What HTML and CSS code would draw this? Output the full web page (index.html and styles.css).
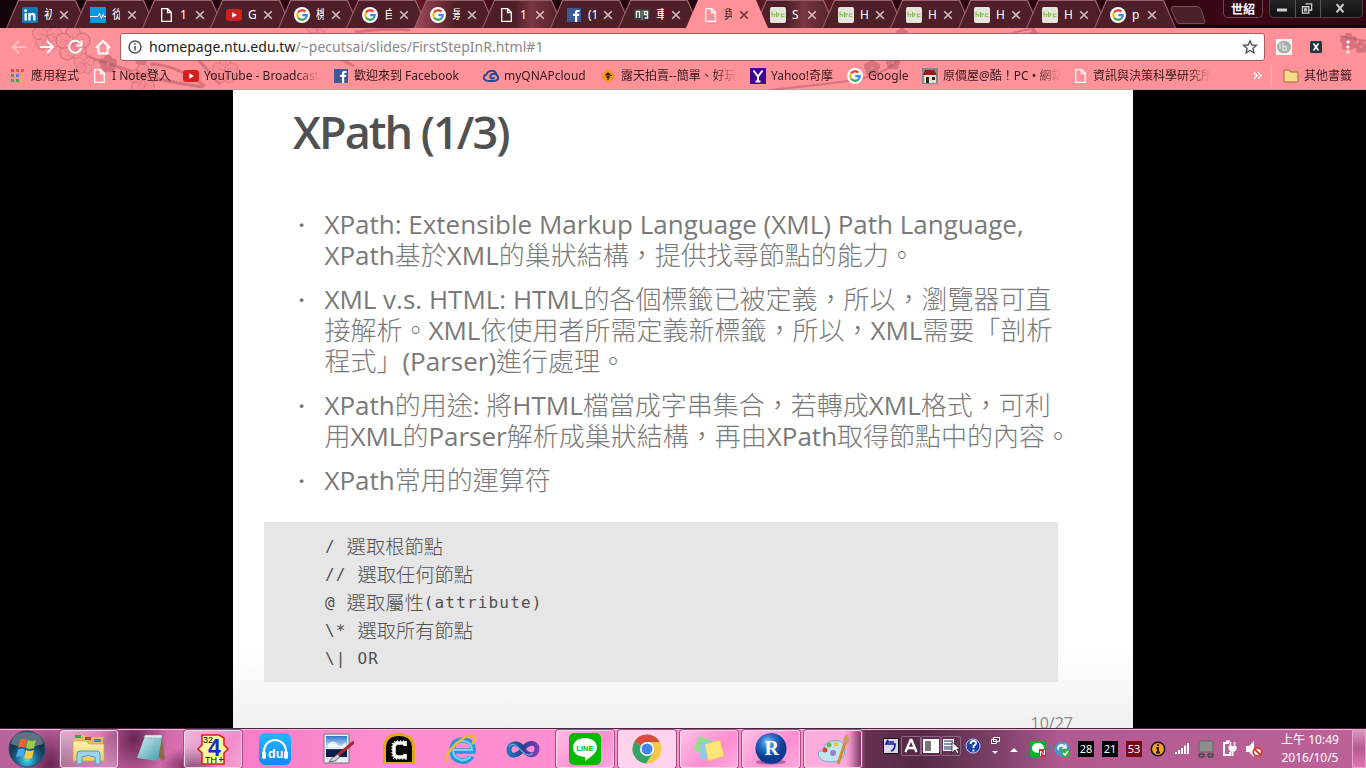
FILE: index.html
```html
<!DOCTYPE html>
<html lang="zh-Hant">
<head>
<meta charset="utf-8">
<title>XPath</title>
<link rel="stylesheet" href="styles.css">
</head>
<body>
<svg class="defs" aria-hidden="true">
  <defs>
    <symbol id="doc" viewBox="0 0 16 16"><path d="M3.7 1.7h6l3.6 3.6v9h-9.6zM9.5 1.7v3.8h3.8" fill="none" stroke="#fff" stroke-width="1.3"/></symbol>
    <symbol id="google" viewBox="0 0 16 16"><circle cx="8" cy="8" r="8" fill="#fff"/><g fill="none" stroke-width="2.3"><path d="M4 5.5A4.8 4.8 0 0 1 11.4 4.6" stroke="#ea4335"/><path d="M4 5.5A5 5 0 0 0 4 10.5" stroke="#fbbc05"/><path d="M4 10.5A4.8 4.8 0 0 0 11.2 11.6" stroke="#34a853"/><path d="M11.2 11.6A4.6 4.6 0 0 0 12.7 8.1H8.2" stroke="#4285f4"/></g></symbol>
    <symbol id="yt" viewBox="0 0 16 16"><rect y="2" width="16" height="12" rx="3" fill="#d2201f"/><path d="M6.2 5.2v5.6L11 8z" fill="#fff"/></symbol>
    <symbol id="fb" viewBox="0 0 16 16"><rect x="1" y="1" width="14" height="14" fill="#3d5a98"/><path d="M9 15V8.9H7V6.8h2V5.2C9 3.2 10.200 2.700 13.500 3v2h-1.300c-.8 0-1 .3-1 1v.8h2.200L13 8.900h-1.800V15z" fill="#fff"/></symbol>
    <symbol id="htc" viewBox="0 0 16 16"><rect width="16" height="16" rx="2" fill="#e6e5dd"/><path d="M2 4.500V10M2 7.500h2.500V10M8 10V7M5.500 7h4.500M6.500 5v5M14.500 7h-3.200v2.700h3.200" fill="none" stroke="#7db63c" stroke-width=".9"/></symbol>
    <symbol id="linkedin" viewBox="0 0 16 16"><rect width="16" height="16" rx="1.500" fill="#0c7cb8"/><path d="M2.500 6h2.300v7.500H2.500zM6.300 6h2.200v1c1.300-1.900 5-1.500 5 2v4.500h-2.300V9.700c0-2.200-2.600-2.100-2.600 0v3.800H6.300z" fill="#fff"/><circle cx="3.600" cy="3.700" r="1.400" fill="#fff"/></symbol>
    <symbol id="pulse" viewBox="0 0 16 16"><rect width="16" height="16" fill="#0c98dc"/><path d="M0 9.500h8l1.500-3 2 5 1.500-4 1 2h2" fill="none" stroke="#fff" stroke-width="1"/></symbol>
    <symbol id="book" viewBox="0 0 16 16"><path d="M0 2h16v10l-8 2-8-2z" fill="#39403f"/><path d="M2.500 11V4.500h3V11M10.500 4.500h3v3h-3zM13.500 7v4h-3" fill="none" stroke="#e9eeee" stroke-width="1.400"/><path d="M8 3v10" stroke="#aaa" stroke-width=".8"/></symbol>
    <symbol id="x" viewBox="0 0 10 10"><path d="M1.200 1.200l7.600 7.600M8.800 1.200L1.200 8.800" fill="none" stroke="currentColor" stroke-width="1.600"/></symbol>
    <symbol id="flower" viewBox="-12 -12 24 24"><g fill="#b35a66"><circle cy="-6" r="5"/><circle cx="5.700" cy="-2" r="5"/><circle cx="3.500" cy="5" r="5"/><circle cx="-3.500" cy="5" r="5"/><circle cx="-5.700" cy="-2" r="5"/></g><circle r="2" fill="#e2808a"/></symbol>
    <symbol id="blossom" viewBox="-12 -12 24 24"><g fill="#f68b94" stroke="#c8707a" stroke-width=".7"><circle cy="-6" r="4.500"/><circle cx="5.700" cy="-2" r="4.500"/><circle cx="3.500" cy="5" r="4.500"/><circle cx="-3.500" cy="5" r="4.500"/><circle cx="-5.700" cy="-2" r="4.500"/></g><circle r="4" fill="#f68b94"/><path d="M0 0v-5M0 0l5-2M0 0l3 5M0 0l-3 5M0 0l-5-2" stroke="#c8707a" stroke-width=".6"/></symbol>
    <linearGradient id="gold" x2="0" y2="1"><stop stop-color="#fff2b5"/><stop offset="1" stop-color="#ecca62"/></linearGradient>
    <radialGradient id="orb" cx=".5" cy=".8"><stop stop-color="#42dcf4"/><stop offset=".6" stop-color="#1c628f"/><stop offset="1" stop-color="#163754"/></radialGradient>
    <radialGradient id="ball" cx=".4" cy=".3"><stop stop-color="#9ccbf6"/><stop offset=".45" stop-color="#2b74cf"/><stop offset="1" stop-color="#0c3b91"/></radialGradient>
    <linearGradient id="note" x2="1" y2="1"><stop stop-color="#d4f1f2"/><stop offset="1" stop-color="#3e98ae"/></linearGradient>
    <linearGradient id="du" x2="0" y2="1"><stop stop-color="#22b7ff"/><stop offset="1" stop-color="#1489f1"/></linearGradient>
    <linearGradient id="vs"><stop stop-color="#1d77c0"/><stop offset=".5" stop-color="#263f91"/><stop offset="1" stop-color="#7b3db3"/></linearGradient>
    <linearGradient id="sky" x2="0" y2="1"><stop stop-color="#2e77c8"/><stop offset=".6" stop-color="#e6f3fb"/><stop offset=".65" stop-color="#0b1c4d"/></linearGradient>
  </defs>
</svg>

<header class="browser">
  <div class="tabstrip">
    <div class="tabs">
      <div class="tab"><svg><use href="#linkedin"/></svg><span>初</span><svg class="close"><use href="#x"/></svg></div>
      <div class="tab"><svg><use href="#pulse"/></svg><span>從</span><svg class="close"><use href="#x"/></svg></div>
      <div class="tab"><svg><use href="#doc"/></svg><span>1</span><svg class="close"><use href="#x"/></svg></div>
      <div class="tab"><svg><use href="#yt"/></svg><span>G</span><svg class="close"><use href="#x"/></svg></div>
      <div class="tab"><svg><use href="#google"/></svg><span>機</span><svg class="close"><use href="#x"/></svg></div>
      <div class="tab"><svg><use href="#google"/></svg><span>自</span><svg class="close"><use href="#x"/></svg></div>
      <div class="tab glow"><svg><use href="#google"/></svg><span>景</span><svg class="close"><use href="#x"/></svg></div>
      <div class="tab glow-right"><svg><use href="#doc"/></svg><span>1</span><svg class="close"><use href="#x"/></svg></div>
      <div class="tab"><svg><use href="#fb"/></svg><span>(1</span><svg class="close"><use href="#x"/></svg></div>
      <div class="tab"><svg><use href="#book"/></svg><span>車</span><svg class="close"><use href="#x"/></svg></div>
      <div class="tab active"><svg><use href="#doc"/></svg><span>與</span><svg class="close"><use href="#x"/></svg></div>
      <div class="tab glow-right"><svg><use href="#htc"/></svg><span>S</span><svg class="close"><use href="#x"/></svg></div>
      <div class="tab"><svg><use href="#htc"/></svg><span>H</span><svg class="close"><use href="#x"/></svg></div>
      <div class="tab"><svg><use href="#htc"/></svg><span>H</span><svg class="close"><use href="#x"/></svg></div>
      <div class="tab"><svg><use href="#htc"/></svg><span>H</span><svg class="close"><use href="#x"/></svg></div>
      <div class="tab"><svg><use href="#htc"/></svg><span>H</span><svg class="close"><use href="#x"/></svg></div>
      <div class="tab"><svg><use href="#google"/></svg><span>p</span><svg class="close"><use href="#x"/></svg></div>
    </div>
    <svg class="newtab" viewBox="0 0 36 18"><path d="M4 .5h23q3 0 4 3l4 12q0 2-2 2H10q-3 0-4-3L1 3Q1 .5 4 .5z" fill="#4b2028" stroke="#7c4f56"/></svg>
    <div class="profile">世紹</div>
    <div class="winctl">
      <svg width="25" height="17" viewBox="0 0 25 17"><path d="M7 8.500h10v3H7z" fill="#ccc"/></svg>
      <svg width="25" height="17" viewBox="0 0 25 17"><path d="M9.700 3.700h6.600v6.600H14M6.700 6.700h6.600v6.600H6.700zM9 9h2v2H9z" fill="none" stroke="#ccc" stroke-width="1.400"/></svg>
      <svg width="42" height="17" viewBox="0 0 42 17"><path d="M16 4l7 8.500M23 4l-7 8.500" stroke="#ccc" stroke-width="2.200"/></svg>
    </div>
  </div>

  <div class="chrome">
    <svg class="petals" viewBox="0 0 1366 62">
      <g fill="none" stroke="#b35a66" stroke-width="3" opacity=".55"><path d="M85 28q25 8 48 16t70 15M195 28l25 28M205 58q-30-22-55-22" /><path d="M770 62q20-2 70-8t60-26M1010 6q10-4 25-5M1340 8l26 5" stroke-width="2"/><path d="M342 32l12 6M355 4q30-4 55-2"/></g>
      <g opacity=".8">
        <use href="#blossom" x="30" y="-9" width="34" height="34"/><use href="#blossom" x="53" y="-4" width="40" height="40"/>
        <use href="#blossom" x="72" y="24" width="24" height="24"/><use href="#blossom" x="126" y="34" width="34" height="34"/>
        <use href="#blossom" x="210" y="28" width="30" height="30"/><use href="#blossom" x="305" y="-10" width="24" height="24"/>
      </g>
      <g opacity=".55">
        <use href="#flower" x="98" y="26" width="20" height="20"/><use href="#flower" x="133" y="22" width="16" height="16"/><use href="#flower" x="1339" y="4" width="19" height="19"/><use href="#flower" x="1354" y="12" width="14" height="14"/>
        <use href="#flower" x="863" y="31" width="18" height="18"/><use href="#flower" x="885" y="27" width="16" height="16"/><use href="#flower" x="895" y="-1" width="14" height="14"/><use href="#flower" x="1027" y="1" width="14" height="14"/>
      </g>
    </svg>
    <div class="toolbar">
      <svg class="nav dim" viewBox="0 0 16 16"><path d="M15 8H2M8 2L2 8l6 6"/></svg>
      <svg class="nav" viewBox="0 0 16 16"><path d="M1 8h13M8 2l6 6-6 6"/></svg>
      <svg class="nav" viewBox="0 0 16 16"><path d="M13 4.200A6 6 0 1 0 14 9M14.500 1.500v5h-5"/></svg>
      <svg class="nav" viewBox="0 0 16 16"><path d="M1 9l7-7 7 7M3.500 7.500v7h9v-7" /></svg>
      <div class="omnibox">
        <svg width="14" height="14" viewBox="0 0 14 14"><circle cx="7" cy="7" r="6" fill="none" stroke="#555" stroke-width="1.500"/><path d="M7 6v4.500M7 3.300v1.500" stroke="#555" stroke-width="1.600"/></svg>
        <span class="url"><b>homepage.ntu.edu.tw</b>/~pecutsai/slides/FirstStepInR.html#1</span>
        <svg width="16" height="16" viewBox="0 0 16 16"><path d="M8 1.800l1.800 4.200 4.500.4-3.400 3 1 4.400L8 11.500l-3.900 2.300 1-4.400-3.400-3 4.500-.4z" fill="none" stroke="#555" stroke-width="1.400"/></svg>
      </div>
      <svg class="ext" viewBox="0 0 16 16"><path d="M0 0h16v16H0z" fill="#f4f4f4"/><ellipse cx="8" cy="8" rx="7" ry="6.300" fill="#a7acad"/><path d="M7 3.500v7.500h3.500V7.500H7M4 4v6" fill="none" stroke="#ddd" stroke-width="1.300"/></svg>
      <svg class="ext second" viewBox="0 0 16 16"><rect x="2" y="2" width="12" height="12" rx="1.500" fill="#263442"/><path d="M5.500 4.500l5 7M10.500 4.500l-5 7" stroke="#fff" stroke-width="1.600"/></svg>
      <svg class="ext third" viewBox="0 0 16 16" fill="#fff"><circle cx="8" cy="3" r="1.600"/><circle cx="8" cy="8" r="1.600"/><circle cx="8" cy="13" r="1.600"/></svg>
    </div>
    <nav class="bookmarks">
      <a class="w81"><svg viewBox="0 0 16 16"><path d="M1 1h3v3H1z" fill="#e2483d"/><path d="M6 1h3v3H6zM11 1h3v3h-3z" fill="#e25a3d"/><path d="M1 6h3v3H1z" fill="#3aa457"/><path d="M6 6h3v3H6z" fill="#4a80e8"/><path d="M11 6h3v3h-3z" fill="#f4b52c"/><path d="M1 11h3v3H1z" fill="#3aa457"/><path d="M6 11h3v3H6z" fill="#3aa457"/><path d="M11 11h3v3h-3z" fill="#f4b52c"/></svg><span>應用程式</span></a>
      <a class="w92"><svg><use href="#doc"/></svg><span>I Note登入</span></a>
      <a class="w150 fade"><svg><use href="#yt"/></svg><span>YouTube - Broadcast</span></a>
      <a class="w150"><svg><use href="#fb"/></svg><span>歡迎來到 Facebook</span></a>
      <a class="w117"><svg viewBox="0 0 16 16"><path d="M13.500 6.500Q12 1.500 7 3 4 4 3.300 6.500-.5 8 1.200 11q1.300 2 4 2h6.500q4-.5 3.300-4.200Q13.500 5 9.500 6 6.500 7 7.500 9.500q2 2 4 0" fill="none" stroke="#264a91" stroke-width="2"/></svg><span>myQNAPcloud</span></a>
      <a class="w150 fade"><svg viewBox="0 0 16 16"><rect x="2.500" y="2.500" width="11" height="11" rx="2" transform="rotate(45 8 8)" fill="#f7941d"/><path d="M8 12V5M5.500 7.500L8 5l2.500 2.500H12M6 9h4" fill="none" stroke="#241505" stroke-width="1.200"/></svg><span>露天拍賣--簡單、好玩</span></a>
      <a class="w97"><svg viewBox="0 0 16 16"><path d="M0 0h16v16H0z" fill="#400090"/><path d="M3.500 2.500L8 8.500l4.500-6M8 8v5.500M5.500 13.500h5" fill="none" stroke="#fff" stroke-width="2"/></svg><span>Yahoo!奇摩</span></a>
      <a class="w75"><svg><use href="#google"/></svg><span>Google</span></a>
      <a class="w150 fade"><svg viewBox="0 0 16 16"><path d="M0 0h16v16H0z" fill="#7d8b88"/><path d="M2 7h12v8H2z" fill="#e4dfcf"/><path d="M3 2h9l3 5H1z" fill="#9c1820"/><path d="M4 9h3v6H4zM10 9h3v3h-3z" fill="#2b2320"/></svg><span>原價屋@酷！PC • 網站</span></a>
      <a class="w150 fade"><svg><use href="#doc"/></svg><span>資訊與決策科學研究所</span></a>
      <svg class="more" viewBox="0 0 10 10"><path d="M1 1.500L4.500 5 1 8.500M5.500 1.500L9 5 5.500 8.500" fill="none" stroke="#fff" stroke-width="1.500"/></svg>
      <a class="others"><svg viewBox="0 0 16 16"><path d="M1 3q0-1 1-1h4l1.500 2H14q1 0 1 1v8q0 1-1 1H2q-1 0-1-1z" fill="#f7d98a" stroke="#9c6b33"/></svg><span>其他書籤</span></a>
    </nav>
  </div>
</header>

<main class="stage">
  <article class="slide">
    <h1>XPath (1/3)</h1>
    <ul>
      <li>XPath: Extensible Markup Language (XML) Path Language,<br>XPath<i>基於</i>XML<i>的巢狀結構，提供找尋節點的能力。</i></li>
      <li>XML v.s. HTML: HTML<i>的各個標籤已被定義，所以，瀏覽器可直<br>接解析。</i>XML<i>依使用者所需定義新標籤，所以，</i>XML<i>需要「剖析<br>程式」</i>(Parser)<i>進行處理。</i></li>
      <li>XPath<i>的用途</i>: <i>將</i>HTML<i>檔當成字串集合，若轉成</i>XML<i>格式，可利<br>用</i>XML<i>的</i>Parser<i>解析成巢狀結構，再由</i>XPath<i>取得節點中的內容。</i></li>
      <li>XPath<i>常用的運算符</i></li>
    </ul>
    <pre>/ <i>選取根節點</i>
// <i>選取任何節點</i>
@ <i>選取屬性</i>(attribute)
\* <i>選取所有節點</i>
\| OR</pre>
    <div class="page">10/27</div>
  </article>
</main>

<footer class="taskbar">
  <div class="apps">
    <div class="start"><svg width="38" height="38" viewBox="0 0 38 38"><circle cx="19" cy="19" r="18" fill="url(#orb)" stroke="#34505f"/><path d="M3 14Q5 2 19 2t16 12Q19 20 3 14z" fill="#fff" opacity=".3"/><path d="M12 10q4-2 7 0l-2 8q-4-2-7 0z" fill="#f0642d"/><path d="M20 10q4 2 8 0l-2 8q-4 2-8 0z" fill="#9ccc42"/><path d="M10 19.500q4-2 7 0l-2 8q-4-2-7 0z" fill="#49a8e8"/><path d="M18 20q4 2 8 0l-2 8q-4 2-8 0z" fill="#fccb3b"/></svg></div>
    <div class="app on"><svg viewBox="0 0 34 32"><path d="M2 6l3-4h8l2 2h16v24H2z" fill="#e3bd5c"/><path d="M3 2h6v3H3z" fill="#36a852"/><path d="M13 4h6v3h-6z" fill="#d43c31"/><path d="M22 6h7v3h-7z" fill="#3d88d8"/><path d="M1 8h13l3 3h15v17H1z" fill="url(#gold)" stroke="#c7a246" stroke-width=".7"/><path d="M5 31V21q0-3 3-3h17q3 0 3 3v10h-5v-7q-7-3-13 0v7z" fill="#9bd5f2" stroke="#4b9cc9"/></svg></div>
    <div class="app"><svg viewBox="0 0 34 32"><path d="M9 3h19l3 23-3 2z" fill="#8d6a45"/><path d="M11 3h17l-4 25-21-3z" fill="url(#note)"/><path d="M11 2h17v3H10z" fill="#dbe8ec" stroke="#6d8790" stroke-width=".6" stroke-dasharray="1.500 1"/></svg></div>
    <div class="app on"><svg viewBox="0 0 34 32"><path d="M6 2h17l5 3v7l4 4-4 4v11H6V20l-4-4 4-4z" fill="#fff7a0" stroke="#d52016" stroke-width="1.500"/><text x="7" y="10" font-size="9">32</text><text x="12" y="23" font-size="23" font-weight="bold" fill="#1532bd">4</text><text x="9" y="30" font-size="9">TH</text><path d="M25 24v5M23 26.500h5" stroke="#1532bd"/></svg></div>
    <div class="app"><svg viewBox="0 0 34 32"><rect x="1" width="32" height="32" rx="6" fill="url(#du)"/><path d="M6 21V18a11 11 0 0 1 22 0v3" fill="none" stroke="#fff" stroke-width="2"/><rect x="4" y="18" width="4" height="8" rx="2" fill="#fff"/><rect x="26" y="18" width="4" height="8" rx="2" fill="#fff"/><text x="10" y="25" font-size="12.500" font-weight="bold" fill="#fff">du</text></svg></div>
    <div class="app"><svg viewBox="0 0 34 32"><path d="M4 1h25v29H4z" fill="#e8edf2" stroke="#777"/><path d="M6 3h21v21H6z" fill="url(#sky)"/><path d="M8 11q6-5 9 0t9-2v5H8z" fill="#fff" opacity=".8"/><path d="M34 9L17 23" stroke="#b4202d" stroke-width="3"/><path d="M18 21l-7 5-2 3 6-1 5-4z" fill="#ccd5da" stroke="#433" stroke-width=".7"/></svg></div>
    <div class="app"><svg viewBox="0 0 34 32"><path d="M1 31V14Q2 0 17 0t16 14v17z" fill="#e4a818"/><path d="M4 29V14Q5 3 17 3t13 11v15z" fill="#050505"/><path d="M23 13V10H15q-3 1-3 4v6q0 4 4 4h7v-3" fill="none" stroke="#fff" stroke-width="3.500"/><path d="M24 12V8H14q-4 1-4 5v8q0 5 5 5h9v-5" fill="none" stroke="#fff" stroke-width="1.500" stroke-dasharray="1 2"/></svg></div>
    <div class="app"><svg viewBox="0 0 34 32"><path d="M28 23Q24 29 18 28 8 27 8 17 9 7 19 7q11 1 10 11H10" fill="none" stroke="#2996dc" stroke-width="5.500"/><path d="M27 22Q24 28 17 27 9 25 9 17 10 8 19 8q9 1 9 9H10" fill="none" stroke="#78d3f8" stroke-width="2"/><path d="M4 29Q-1 24 11 12T30 3q3 2-2 8" fill="none" stroke="#efb831" stroke-width="2.500"/></svg></div>
    <div class="app"><svg viewBox="0 0 34 32"><path d="M17 16C12 8 3 10 3 17s8 7 14-1 14-7 14 0-9 8-14 0z" fill="none" stroke="url(#vs)" stroke-width="5"/><path d="M3 14q2-4 6-2l9 8q5 4 9 0" fill="none" stroke="#67a8de" stroke-width="1.200"/></svg></div>
    <div class="app on bright"><svg viewBox="0 0 34 32"><rect x="1" width="32" height="32" rx="5" fill="#00b900"/><path d="M29 14.500c0 5-6 9.500-12 13.500v-4C10 24 5 20 5 14.500S10 5 17 5s12 4 12 9.500z" fill="#fff"/><text x="8.500" y="17.500" font-size="7.500" font-weight="bold" fill="#00b900" textLength="17">LINE</text></svg></div>
    <div class="app on bright current"><svg viewBox="0 0 34 32"><circle cx="17" cy="16" r="14.500" fill="#f4c94a"/><path d="M17 16L4.400 8.800A14.500 14.500 0 0 1 29.600 9H17z" fill="#d74d3e"/><path d="M17 16L4.400 8.800A14.500 14.500 0 0 0 16 30.500l7-11z" fill="#36a36a"/><circle cx="17" cy="16" r="7" fill="#fff"/><circle cx="17" cy="16" r="5.500" fill="#4285e8"/></svg></div>
    <div class="app on bright"><svg viewBox="0 0 34 32"><path d="M7 3l14 5-5 15L1 17z" fill="#9ad894"/><path d="M9 9l14-1v17l-15 1z" fill="#8bc9ee"/><path d="M13 11l15-4 4 16-16 5z" fill="#ffe57a" stroke="#e5bf43" stroke-width=".5"/></svg></div>
    <div class="app on bright"><svg viewBox="0 0 34 32"><ellipse cx="17" cy="29" rx="15" ry="2.500" fill="#5c2f69" opacity=".5"/><circle cx="17" cy="15.500" r="15.500" fill="url(#ball)"/><text class="serif" x="10.500" y="22" font-size="20" font-weight="bold" fill="#fff">R</text></svg></div>
    <div class="app on paint"><svg viewBox="0 0 34 32"><path d="M15 8q13-3 14 8 0 13-14 13Q2 29 2 20q1-3 5-2 4-1 1-4 1-4 7-6z" fill="#c4e3f1" stroke="#72a9c7"/><circle cx="9" cy="17" r="2.500" fill="#d64835"/><circle cx="13" cy="12" r="2.500" fill="#64b755"/><circle cx="20" cy="11" r="2.500" fill="#eac743"/><circle cx="17" cy="20" r="3" fill="#9a7fc6"/><path d="M30 7L22 31" stroke="#d88a31" stroke-width="3"/><path d="M27 9q0-6 4-8 3 4 1 10z" fill="#c8a166"/></svg></div>
  </div>
  <div class="tray">
    <svg class="s20" viewBox="0 0 20 20"><path d="M2.500 2.500h15v15h-15z" fill="#ddd6e8" stroke="#111"/><path d="M7 4L5 8h9q0 6-4 7M6 6h7" fill="none" stroke="#101d9b" stroke-width="1.700"/></svg>
    <svg class="s20 key" viewBox="0 0 20 20"><path d="M4.500 16L9.500 4h1l5 12M6.500 12h7" fill="none" stroke="#fff" stroke-width="2.300"/></svg>
    <svg class="s20 key" viewBox="0 0 20 20"><path d="M2 3h16v14H2z" fill="#fff"/><path d="M4 5h6v10H4z" fill="#777"/></svg>
    <svg class="s20 key" viewBox="0 0 20 20"><path d="M2 3h11v12H2z" fill="#fff"/><path d="M3 5h9M3 8h9M3 11h9M3 13h9" stroke="#14216f"/><path d="M11 6v11l3-3 2 4 2-1-2-4h3z" fill="#fff" stroke="#111" stroke-width=".7"/></svg>
    <svg class="s24" viewBox="0 0 24 20"><circle cx="12" cy="10" r="7" fill="#1943a6" stroke="#c6d1ed"/><path d="M9.500 8q0-3 3-3t2.500 2.500Q14.500 9 12.500 10v2M12.500 13.500v2" fill="none" stroke="#fff" stroke-width="1.800"/></svg>
    <svg class="s20" viewBox="0 0 20 20"><path d="M8.500 1.500h6v4h-6zM6.500 3.500h5v4h-5z" fill="#593247" stroke="#fff"/><path d="M7 15h6l-3 3z" fill="#fff"/></svg>
    <svg class="s18" viewBox="0 0 18 20"><path d="M5 16h8l-4-4z" fill="#fff"/></svg>
    <svg class="t" viewBox="0 0 24 20"><rect x="4" y="2" width="16" height="16" rx="2" fill="#08b32b"/><ellipse cx="12" cy="9" rx="6" ry="5" fill="#fff"/><path d="M13 10h7v8h-7z" fill="#d92b2b"/><path d="M14.500 17v-5l4 4v-5" fill="none" stroke="#fff"/></svg>
    <svg class="t" viewBox="0 0 24 20"><circle cx="12" cy="10" r="7.500" fill="#4795cb"/><path d="M7 10q0-5 5-5l3 1 1-2 1 6h-5l1-2q-5-1-4 4" fill="#e9f8ff"/><circle cx="15.500" cy="14" r="4.500" fill="#39aa47"/><path d="M13 14l2 2 3-4" fill="none" stroke="#fff" stroke-width="1.500"/></svg>
    <span class="t num"><b>28</b></span><span class="t num"><b>21</b></span><span class="t num red"><b>53</b></span>
    <svg class="t" viewBox="0 0 24 20"><circle cx="12" cy="10" r="6.700" fill="#efa12c" stroke="#1d1308" stroke-width="1.500"/><path d="M10.500 9H12v4.500M10 13.500h4M11 6.200h2" stroke="#1d1308" stroke-width="1.800" fill="none"/></svg>
    <svg class="t" viewBox="0 0 24 20" fill="#fff"><path d="M5 13h2v2H5zM8 11h2v4H8zM11 9h2v6h-2zM14 6.500h2V15h-2zM17 4h2v11h-2z"/></svg>
    <svg class="t" viewBox="0 0 24 20"><path d="M5 2h14v11H5z" fill="#8e8e8e" stroke="#666"/><path d="M5 15h5v3H5zM14 15h5v3h-5z" fill="#777" stroke="#333"/></svg>
    <svg class="t" viewBox="0 0 24 20"><path d="M11 4H6v12h6v-3M8 2.500h4" fill="none" stroke="#fff" stroke-width="2"/><path d="M12.500 3v4M16.500 3v4" stroke="#fff" stroke-width="1.500"/><path d="M10.500 7h8v3q-1 3-4 3t-4-3zM13.500 12h2v5h-2z" fill="#fff"/></svg>
    <svg class="t" viewBox="0 0 24 20"><path d="M4 7h3l5-5v16l-5-5H4z" fill="#fff"/><circle cx="15.500" cy="13" r="4.200" fill="#fff" stroke="#df3427" stroke-width="1.800"/><path d="M12.500 10l6 6" stroke="#df3427" stroke-width="1.800"/></svg>
    <div class="clock">上午 10:49<br>2016/10/5</div>
    <div class="peek"></div>
  </div>
</footer>
</body>
</html>
```
FILE: styles.css
```css
* { box-sizing: border-box; }
body {
  margin: 0; width: 1366px; height: 768px; overflow: hidden;
  display: flex; flex-direction: column; background: #000;
  font-family: "Noto Sans", "Noto Sans CJK TC", sans-serif;
}
svg { display: block; flex: none; }
i { font-style: normal; }
.defs { position: absolute; width: 0; height: 0; }

.browser { flex: none; height: 90px; }
.tabstrip {
  height: 28px; display: flex; align-items: flex-start; padding-left: 6px;
  background: linear-gradient(90deg, #15030a, #280611 20%, #681728 32%, #1d050d 40%, #25060e 52%, #7c2337 58%, #2f0712 65%, #29060f 84%, #3d0715 90%, #320410);
  box-shadow: inset 0 -3px #140207;
}
.tabs { display: flex; height: 28px; }
.tab {
  width: 82px; height: 28px; margin-right: -14px; padding: 0 16px;
  display: flex; align-items: center; position: relative; z-index: 0; color: #fff;
  clip-path: polygon(12px 0, 70px 0, 82px 28px, 0 28px); background: #966169;
}
.tab::before {
  content: ""; position: absolute; inset: 1px 0 0; z-index: -1;
  background: #4e1f28; clip-path: polygon(13px 0, 69px 0, 81px 27px, 1px 27px);
}
.tab.active { z-index: 1; color: #222; background: #ff9199; }
.tab.active::before { background: #ff9199; }
.tab.glow::before { background: linear-gradient(90deg, #a1495b, #4e1f28 50%); }
.tab.glow-right::before { background: linear-gradient(90deg, #4e1f28 40%, #773640 60%, #4e1f28); }
.tab svg { width: 16px; height: 16px; margin-top: 2px; }
.tab span {
  width: 8px; margin-left: 6px; overflow: hidden; font-size: 12px; line-height: 18px;
  white-space: nowrap; margin-top: 2px;
}
.tab svg.close { width: 10px; height: 10px; margin-left: 7px; color: #d3bfc2; }
.tab.active svg.close { color: #703139; }
.newtab { width: 36px; height: 18px; margin: 6px 0 0 8px; }
.profile {
  width: 40px; height: 18px; margin-left: 17px; border: 1px solid #734550; border-top: 0;
  border-radius: 0 0 5px 5px; background: #300913; color: #fff;
  font-size: 12px; font-weight: 700; line-height: 20px; text-align: center;
}
.winctl { display: flex; margin-left: 6px; border: 1px solid #4f4045; border-top: 0; border-radius: 0 0 5px 5px; background: linear-gradient(#272326, #111); }
.winctl svg + svg { border-left: 1px solid #5d5357; }

.chrome {
  height: 62px; position: relative; z-index: 0;
  background: #ff9199; border-bottom: 1px solid #b7a3a6;
}
.petals { position: absolute; left: 0; top: 0; width: 1366px; height: 62px; z-index: -1; }
.toolbar { height: 33px; padding: 5px 8px 0 11px; display: flex; align-items: center; }
.nav { width: 16px; height: 16px; margin-right: 12px; fill: none; stroke: #fff; stroke-width: 2; }
.nav.dim { opacity: .4; }
.omnibox {
  width: 1145px; height: 28px; margin-left: -3px; padding: 0 6px 0 7px;
  display: flex; align-items: center; border: 1px solid #a95c64; border-radius: 3px; background: #fff;
}
.url { flex: 1; margin-left: 7px; font-size: 14px; letter-spacing: .03px; line-height: 20px; color: #888; }
.url b { font-weight: 400; color: #222; }
.ext { width: 16px; height: 16px; margin-left: 11px; }
.ext.second { margin-left: 16px; }
.ext.third { margin-left: 16px; }
.bookmarks { height: 28px; padding: 1px 13px 0 10px; display: flex; align-items: center; color: #33191c; font-size: 12px; }
.bookmarks a { display: flex; align-items: center; flex: none; }
.bookmarks a svg { width: 16px; height: 16px; margin-right: 5px; }
.bookmarks span { max-width: 118px; overflow: hidden; white-space: nowrap; line-height: 20px; }
.fade span { -webkit-mask-image: linear-gradient(90deg, #000 80%, transparent); mask-image: linear-gradient(90deg, #000 80%, transparent); }
.w75 { width: 75px; } .w81 { width: 81px; } .w92 { width: 92px; } .w97 { width: 97px; }
.w117 { width: 117px; } .w150 { width: 150px; }
.more { width: 9px; height: 9px; margin-left: 31px; }
.bookmarks .others { margin-left: 9px; padding-left: 11px; border-left: 1px solid #ffb9be; }

.stage { height: 638px; overflow: hidden; display: flex; justify-content: center; }
.slide {
  width: 900px; height: 638px; padding: 14px 60px 0; overflow: hidden;
  background: linear-gradient(#fff 88%, #efefef);
  font-family: "Open Sans", "Noto Sans CJK TC", sans-serif; color: #797979;
}
.slide h1 { margin: 0; height: 105px; font-size: 45px; line-height: 55px; font-weight: 600; letter-spacing: -2px; color: #515151; }
.slide ul { margin: 0; padding: 0; list-style: none; font-size: 26px; line-height: 31.2px; white-space: nowrap; }
.slide li { margin: 0 0 12.6px; padding-left: 31.4px; position: relative; }
.slide li::before { content: "·"; position: absolute; left: 5px; font-weight: 600; }
.slide li i { font-weight: 300; font-family: "Noto Sans CJK TC Light", "Noto Sans CJK TC", sans-serif; line-height: 1; }
.slide pre {
  width: 794px; height: 160px; margin: 26px 0 0 -29px; padding: 11px 0 0 61px;
  background: #e6e6e6; color: #515151; font: 16px/28px "DejaVu Sans Mono", monospace; letter-spacing: 1.17px;
}
.slide pre i { font: 300 19.3px/1 "Noto Sans CJK TC Light", "Noto Sans CJK TC", sans-serif; letter-spacing: 0; vertical-align: -2px; }
.page { margin: 30px 0 0; text-align: right; font-size: 16px; line-height: 22px; color: #8b8b8b; }

.taskbar {
  height: 40px; flex: none; display: flex; border-top: 1px solid #4d2440; box-shadow: inset 0 1px #f5b6dc;
  background:
    radial-gradient(ellipse 30px 40px at 50px 35px, #692653, transparent),
    radial-gradient(ellipse 34px 40px at 134px 10px, #692653, transparent),
    radial-gradient(ellipse 30px 20px at 190px 38px, #692653, transparent),
    linear-gradient(90deg, #b9629a 0, #c864a3 140px, #f77fc7 250px, #ff8ed1 400px, #ff8ed1 850px, #653052 866px, #562946 920px, #7e426a 1000px, #b05990 1060px, #bd6299 1366px);
}
.apps { display: flex; gap: 4px; padding-top: 1px; width: 862px; flex: none; }
.start { width: 56px; padding-left: 8px; flex: none; }
.app { width: 58px; height: 38px; display: flex; align-items: center; justify-content: center; flex: none; }
.app svg { width: 34px; height: 32px; }
.app text { font-family: "Liberation Sans", sans-serif; }
.app text.serif { font-family: "Liberation Serif", serif; }
.app.on { border: 1px solid #f7d6e8; border-radius: 3px; background: linear-gradient(135deg, #ffffff88, #ffffff22 60%, #ffffff44); box-shadow: 0 0 0 1px #a64d81; }
.app.bright { background: linear-gradient(135deg, #ffe0f299, #ff90d022 60%, #ffe0f255); }
.app.current { background: #ffffff99; }
.app.paint { background: linear-gradient(90deg, #ffffff44 70%, #5b204566); }
.tray { flex: 1; display: flex; align-items: center; padding-left: 19px; }
.s18, .s20, .s24, .t { height: 20px; flex: none; }
.s18 { width: 18px; margin-right: 3px; } .s20 { width: 20px; } .s24, .t { width: 24px; }
.s18, .s20, .s24 { margin-top: -5px; }
.key { box-shadow: inset 0 0 0 1px #8d6683; border-radius: 2px; }
.num { display: flex; align-items: center; justify-content: center; }
.num b { width: 16px; height: 16px; background: #000; color: #fff; font: 11px/16px "Noto Sans", sans-serif; text-align: center; }
.num.red b { background: #780814; }
.clock { width: 86px; padding-left: 2px; text-align: center; color: #fff; font-size: 12px; line-height: 18px; }
.peek { width: 14px; height: 39px; border: 1px solid #e5a5ca; background: linear-gradient(#d99bc1, #b45b91 50%, #e373b6); }
```
